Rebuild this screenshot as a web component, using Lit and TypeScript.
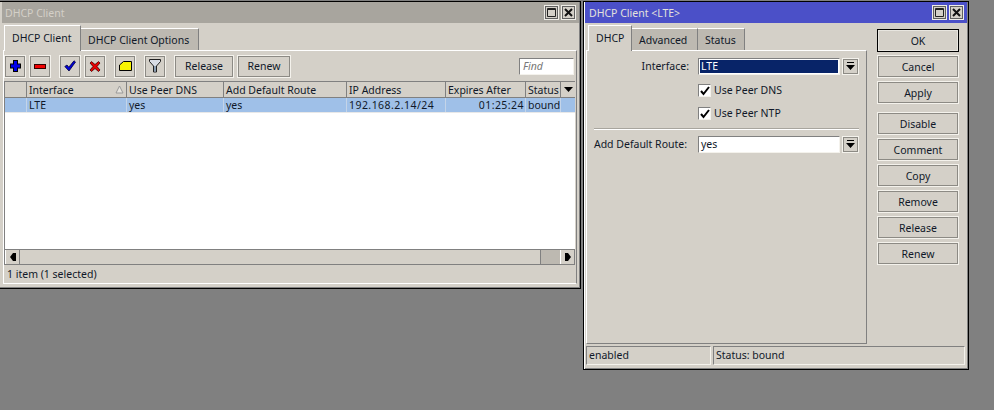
import { LitElement, html, css, svg } from "lit";
import { customElement } from "lit/decorators.js";

const dropIcon = html`<svg width="9" height="9" viewBox="0 0 9 9"><path d="M1 0h7v1H1zM0 3h9L4.500 8z" fill="#000"/></svg>`;

const icons: Record<string, { w: number; h: number; body: unknown }> = {
  plus: { w: 11, h: 12, body: svg`<path d="M3 0h5v3.500h3v5H8V12H3V8.500H0v-5h3z" fill="#000"/><path d="M4 1h3v3.500h3v3H7V11H4V7.500H1v-3h3z" fill="#0000e8"/>` },
  minus: { w: 12, h: 5, body: svg`<rect width="12" height="5" fill="#300"/><rect y="1" x="1" width="10" height="3" fill="#f00000"/>` },
  check: { w: 12, h: 12, body: svg`<path d="M.8 6.500 3 5l1.800 2.200L10 .8 11.500 2 5 11z" fill="#0000d8" stroke="#000038" stroke-width=".8"/>` },
  cross: { w: 12, h: 11, body: svg`<path d="M1 2 2.500.6 6 3.500 9.500.6 11 2 8 5.500l3 3.500L9.500 10.500 6 7.500l-3.500 3L1 9l3-3.500z" fill="#e80000" stroke="#400000" stroke-width=".8"/>` },
  note: { w: 13, h: 10, body: svg`<path d="M.5 4 4.500.5h8v9H.5z" fill="#f8f400" stroke="#000" stroke-width="1"/>` },
  filter: { w: 12, h: 14, body: svg`<path d="M.5.500h11v2L7.500 7v6h-3V7L.5 2.500z" fill="#d8dce4" stroke="#202020" stroke-width="1"/><path d="M6 7v5.500" stroke="#7088a0" stroke-width="1.500"/>` },
};

@customElement("app-root")
export class AppRoot extends LitElement {
  static styles = css`
    :host { display: block; position: relative; width: 994px; height: 410px; background: #808080; overflow: hidden;
      font-family: "Noto Sans", sans-serif; font-size: 10.5px; line-height: 14px; color: #101828; }
    * { box-sizing: border-box; }
    .win { position: absolute; background: #d4d0c8; border: 1px solid #000; display: flex; flex-direction: column; }
    .w1 { left: -1px; top: 1px; width: 582px; height: 288px; padding: 0 1px 2px 2px; box-shadow: inset -1px -1px 0 #808080; }
    .w2 { left: 583px; top: 1px; width: 386px; height: 369px; padding: 0 1px 2px 1px; box-shadow: inset 1px 0 0 #fff, inset -1px -1px 0 #808080; }
    .title { height: 21px; flex: none; display: flex; align-items: center; gap: 2px; padding-right: 3px; }
    .w1 .title { background: #a8a59e; color: #d4d0c8; padding-left: 3px; }
    .w2 .title { background: #4b50c8; color: #e4e2dc; padding-left: 4px; }
    .tname { flex: 1; }
    .wb { width: 15px; height: 15px; background: #d4d0c8; border: 1px solid #f0eee8; box-shadow: inset 0 0 0 1px #606060; display: flex; align-items: center; justify-content: center; }
    .wb svg { display: block; }
    .tabs { display: flex; align-items: flex-end; height: 27px; flex: none; padding-left: 2px; }
    .w2 .tabs { padding-left: 3px; }
    .tab { height: 22px; padding: 4px 0 0 7px; background: #bdb9b1; border-top: 1px solid #fff; border-right: 1px solid #808080; white-space: nowrap; flex: none; }
    .tab.on { height: 26px; background: #d4d0c8; border-left: 1px solid #fff; padding-top: 5px; position: relative; top: 1px; z-index: 1; }
    .w1 .panel { margin: 0 2px 2px 1px; padding-right: 1px; flex: 1; display: flex; flex-direction: column; border: 1px solid; border-color: #fff #808080 #fff #fff; min-height: 0; }
    .toolbar { height: 30px; flex: none; display: flex; align-items: center; }
    .tb { height: 23px; width: 22px; border: 1px solid #f4f2ec; box-shadow: inset 0 0 0 1px #8c8a84; display: flex; align-items: center; justify-content: center; margin-right: 3px; flex: none; }
    .tb svg { display: block; }
    .tb.release { width: 60px; }
    .tb.renew { width: 54px; }
    .gap { width: 5px; flex: none; }
    .find { margin-left: auto; width: 55px; height: 17px; background: #fff; border: 1px solid; border-color: #808080 #f4f2ec #f4f2ec #808080; font-style: italic; color: #777; padding-left: 3px; line-height: 15px; margin-right: 1px; }
    .table { flex: 1; display: flex; flex-direction: column; background: #fff; min-height: 0; border-left: 1px solid #808080; }
    .hrow, .drow { display: flex; flex: none; }
    .hrow { height: 17px; background: #d4d0c8; border-top: 1px solid #808080; }
    .hc { border-right: 1px solid #808080; border-bottom: 1px solid #808080; padding: 1px 0 0 2px; white-space: nowrap; overflow: hidden; position: relative; flex: none; }
    .hc.end { flex: 1; padding: 5px 0 0 3px; border-right: none; }
    .hc.end svg { display: block; }
    .drow { height: 15px; background: #9fc0e8; border-bottom: 1px solid #e8e8e8; }
    .dc { padding-left: 2px; white-space: nowrap; overflow: hidden; border-right: 1px solid #c4d4e8; flex: none; }
    .num { letter-spacing: .45px; }
    .r { text-align: right; padding-right: 1px; }
    .sortmark { position: absolute; right: 2px; top: 3px; }
    .hscroll { height: 16px; flex: none; display: flex; background: #d4d0c8; border-top: 1px solid #808080; border-bottom: 1px solid #808080; }
    .sb { width: 15px; display: flex; align-items: center; justify-content: center; border-left: 1px solid #fff; border-right: 1px solid #808080; flex: none; }
    .track { flex: 1; }
    .thumb { width: 20px; background: #bdb9b1; border-left: 1px solid #808080; flex: none; }
    .fill { flex: 1; min-height: 0; }
    .status1 { height: 18px; flex: none; padding-left: 3px; line-height: 18px; }
    .w2body { flex: 1; display: flex; min-height: 0; }
    .left { width: 282px; flex: none; display: flex; flex-direction: column; }
    .w2 .panel { margin-left: 1px; width: 281px; height: 294px; border: 1px solid; border-color: #fff #808080 #808080 #fff; display: flex; flex-direction: column; padding-top: 7px; }
    .frow { display: flex; align-items: center; height: 17px; }
    .lab { width: 111px; text-align: right; padding-right: 9px; flex: none; white-space: nowrap; line-height: 13px; }
    .frow.wide .lab { padding-right: 11px; }
    .input { width: 142px; height: 17px; background: #fff; border: 1px solid; border-color: #808080 #f4f2ec #f4f2ec #808080; padding-left: 2px; line-height: 14px; margin-right: 2px; flex: none; }
    .input.sel { padding: 1px; }
    .input.sel span { display: block; background: #082468; color: #fff; height: 13px; line-height: 13px; padding-left: 1px; }
    .drop { width: 17px; height: 17px; border: 1px solid #f4f2ec; box-shadow: inset 0 0 0 1px #8c8a84; display: flex; align-items: center; justify-content: center; flex: none; }
    .crow { display: flex; align-items: center; margin-left: 111px; gap: 3px; height: 13px; line-height: 11px; }
    .crow.a { margin-top: 9px; }
    .crow.b { margin-top: 10px; }
    .cb { width: 13px; height: 13px; background: #fff; border: 1px solid; border-color: #808080 #f4f2ec #f4f2ec #808080; display: flex; align-items: center; justify-content: center; }
    .sep { margin: 8px 7px 6px 7px; border-top: 1px solid #a8a59e; border-bottom: 1px solid #fff; }
    .right { flex: 1; display: flex; flex-direction: column; padding: 6px 0 0 10px; gap: 3px; }
    .btn { width: 82px; height: 23px; border: 1px solid #f4f2ec; box-shadow: inset 0 0 0 1px #8c8a84; display: flex; align-items: center; justify-content: center; flex: none; }
    .btn.def { border-color: #000; box-shadow: inset 0 0 0 1px #e8e6e0; }
    .btn.sp { margin-top: 5px; }
    .stat { height: 19px; display: flex; gap: 2px; margin: 2px 2px 2px 1px; flex: none; }
    .st { height: 19px; border: 1px solid; border-color: #808080 #f4f2ec #f4f2ec #808080; padding-left: 2px; line-height: 17px; }
    .st.a { width: 125px; flex: none; }
    .st.b { flex: 1; }
  `;

  private wbtns() {
    return html`
      <div class="wb"><svg width="11" height="11" viewBox="0 0 11 11"><path d="M1.500 1.500h8v8h-8z" fill="none" stroke="#222"/><path d="M1 2.500h9" stroke="#222"/></svg></div>
      <div class="wb"><svg width="9" height="9" viewBox="0 0 9 9"><path d="M1 1l7 7M8 1l-7 7" stroke="#111" stroke-width="2"/></svg></div>`;
  }

  private tool(name: string) {
    const i = icons[name];
    return html`<div class="tb"><svg width=${i.w} height=${i.h} viewBox="0 0 ${i.w} ${i.h}">${i.body}</svg></div>`;
  }

  private tabs(items: [string, number][]) {
    return html`<div class="tabs">${items.map(([t, w], i) => html`<div class="tab ${i === 0 ? "on" : ""}" style="width:${w}px">${t}</div>`)}</div>`;
  }

  render() {
    const cols = [22, 100, 97, 123, 99, 80, 35];
    const heads = ["", "Interface", "Use Peer DNS", "Add Default Route", "IP Address", "Expires After", "Status"];
    const cells = ["", "LTE", "yes", "yes", "192.168.2.14/24", "01:25:24", "bound"];
    const check = html`<svg width="10" height="10" viewBox="0 0 10 10"><path d="M1 5l2.500 3L9 1" fill="none" stroke="#000" stroke-width="2"/></svg>`;
    return html`
      <div class="win w1">
        <div class="title"><span class="tname">DHCP Client</span>${this.wbtns()}</div>
        ${this.tabs([["DHCP Client", 77], ["DHCP Client Options", 118]])}
        <div class="panel">
          <div class="toolbar">
            ${this.tool("plus")}${this.tool("minus")}<div class="gap"></div>
            ${this.tool("check")}${this.tool("cross")}<div class="gap"></div>
            ${this.tool("note")}<div class="gap"></div>
            ${this.tool("filter")}<div class="gap"></div>
            <div class="tb release">Release</div><div class="tb renew">Renew</div>
            <div class="find">Find</div>
          </div>
          <div class="table">
            <div class="hrow">
              ${heads.map((h, i) => html`<div class="hc" style="width:${cols[i]}px">${h}${i === 1
                ? html`<svg class="sortmark" width="9" height="9" viewBox="0 0 9 9"><path d="M4.500 1 8 8H1z" fill="#e8e6e0" stroke="#999" stroke-width="1"/></svg>`
                : ""}</div>`)}
              <div class="hc end"><svg width="9" height="5" viewBox="0 0 9 5"><path d="M0 0h9L4.500 5z" fill="#000"/></svg></div>
            </div>
            <div class="drow">
              ${cells.map((c, i) => html`<div class="dc ${i === 5 ? "r num" : i === 4 ? "num" : ""}" style="width:${cols[i]}px">${c}</div>`)}
            </div>
            <div class="fill"></div>
            <div class="hscroll">
              <div class="sb"><svg width="6" height="8" viewBox="0 0 6 8"><path d="M0 4 3 0h3v8H3z" fill="#000"/></svg></div>
              <div class="track"></div>
              <div class="thumb"></div>
              <div class="sb"><svg width="6" height="8" viewBox="0 0 6 8"><path d="M6 4 3 0H0v8h3z" fill="#000"/></svg></div>
            </div>
          </div>
          <div class="status1">1 item (1 selected)</div>
        </div>
      </div>
      <div class="win w2">
        <div class="title"><span class="tname">DHCP Client &lt;LTE&gt;</span>${this.wbtns()}</div>
        <div class="w2body">
          <div class="left">
            ${this.tabs([["DHCP", 44], ["Advanced", 66], ["Status", 47]])}
            <div class="panel">
              <div class="frow"><div class="lab">Interface:</div><div class="input sel"><span>LTE</span></div><div class="drop">${dropIcon}</div></div>
              <div class="crow a"><div class="cb">${check}</div>Use Peer DNS</div>
              <div class="crow b"><div class="cb">${check}</div>Use Peer NTP</div>
              <div class="sep"></div>
              <div class="frow wide"><div class="lab">Add Default Route:</div><div class="input">yes</div><div class="drop">${dropIcon}</div></div>
            </div>
          </div>
          <div class="right">
            <div class="btn def">OK</div><div class="btn">Cancel</div><div class="btn">Apply</div>
            <div class="btn sp">Disable</div><div class="btn">Comment</div><div class="btn">Copy</div><div class="btn">Remove</div><div class="btn">Release</div><div class="btn">Renew</div>
          </div>
        </div>
        <div class="stat"><div class="st a">enabled</div><div class="st b">Status: bound</div></div>
      </div>`;
  }
}
